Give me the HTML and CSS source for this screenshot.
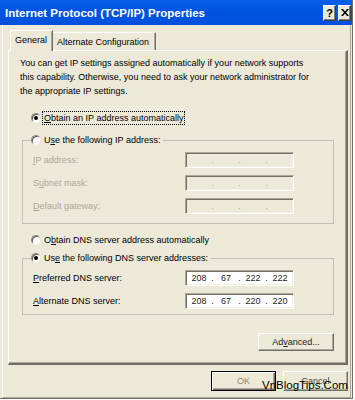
FILE: index.html
```html
<!DOCTYPE html>
<html>
<head>
<meta charset="utf-8">
<link rel="stylesheet" href="styles.css">
</head>
<body>
<div class="window">
  <div class="titlebar">
    <span class="title">Internet Protocol (TCP/IP) Properties</span>
    <div class="caption-btns">
      <span class="cbtn help">?</span>
      <span class="cbtn close"><svg width="8" height="7" viewBox="0 0 8 7"><path d="M0 0h2l2 2.4L6 0h2L5 3.5 8 7H6L4 4.6 2 7H0l3-3.5z" fill="#000"/></svg></span>
    </div>
  </div>
  <div class="client">
    <div class="tabs">
      <div class="tab active">General</div>
      <div class="tab">Alternate Configuration</div>
    </div>
    <div class="panel">
      <p class="intro">You can get IP settings assigned automatically if your network supports<br>this capability. Otherwise, you need to ask your network administrator for<br>the appropriate IP settings.</p>

      <div class="option"><span class="radio checked"></span><span class="focus"><u>O</u>btain an IP address automatically</span></div>

      <fieldset class="group group-ip">
        <legend><span class="radio"></span><span>U<u>s</u>e the following IP address:</span></legend>
        <div class="field disabled"><span class="label"><u>I</u>P address:</span><span class="ipbox"><span class="seg"></span><span class="dot">.</span><span class="seg"></span><span class="dot">.</span><span class="seg"></span><span class="dot">.</span><span class="seg"></span></span></div>
        <div class="field disabled"><span class="label">S<u>u</u>bnet mask:</span><span class="ipbox"><span class="seg"></span><span class="dot">.</span><span class="seg"></span><span class="dot">.</span><span class="seg"></span><span class="dot">.</span><span class="seg"></span></span></div>
        <div class="field disabled"><span class="label"><u>D</u>efault gateway:</span><span class="ipbox"><span class="seg"></span><span class="dot">.</span><span class="seg"></span><span class="dot">.</span><span class="seg"></span><span class="dot">.</span><span class="seg"></span></span></div>
      </fieldset>

      <div class="option option-dns"><span class="radio"></span><span>O<u>b</u>tain DNS server address automatically</span></div>

      <fieldset class="group group-dns">
        <legend><span class="radio checked"></span><span>Us<u>e</u> the following DNS server addresses:</span></legend>
        <div class="field"><span class="label"><u>P</u>referred DNS server:</span><span class="ipbox enabled"><span class="seg">208</span><span class="dot">.</span><span class="seg">67</span><span class="dot">.</span><span class="seg">222</span><span class="dot">.</span><span class="seg">222</span></span></div>
        <div class="field"><span class="label"><u>A</u>lternate DNS server:</span><span class="ipbox enabled"><span class="seg">208</span><span class="dot">.</span><span class="seg">67</span><span class="dot">.</span><span class="seg">220</span><span class="dot">.</span><span class="seg">220</span></span></div>
      </fieldset>

      <div class="adv-row"><span class="btn adv">Ad<u>v</u>anced...</span></div>
    </div>
    <div class="footer">
      <span class="btn default ok">OK</span>
      <span class="btn cancel">Cancel</span>
    </div>
  </div>
  <div class="watermark">VnBlogTips.Com</div>
</div>
</body>
</html>
```

FILE: styles.css
```css
* { box-sizing: border-box; }
html, body { margin: 0; padding: 0; }
body {
  width: 355px;
  height: 400px;
  overflow: hidden;
  background: #ffffff;
  font-family: "Liberation Sans", Arial, sans-serif;
  font-size: 9px;
  color: #000;
}
u { text-decoration: underline; text-underline-offset: 1px; }

.window {
  position: relative;
  width: 353px;
  height: 399px;
  background: #ece9d8;
  border-right: 1px solid #716f64;
  border-bottom: 1px solid #716f64;
  display: flex;
  flex-direction: column;
}

.titlebar {
  height: 25px;
  flex: none;
  background: linear-gradient(#0a5fe8, #0054e3 40%, #0050dc);
  display: flex;
  align-items: center;
  justify-content: space-between;
  padding: 0 1px 0 5px;
}
.title {
  color: #fff;
  font-weight: bold;
  font-size: 11.5px;
}
.caption-btns { display: flex; gap: 2px; }
.cbtn {
  width: 13px;
  height: 16px;
  background: #ece9d8;
  border: 1px solid;
  border-color: #fff #404040 #404040 #fff;
  box-shadow: inset -1px -1px 0 #808080;
  display: flex;
  align-items: center;
  justify-content: center;
  font-weight: bold;
  font-size: 11px;
  color: #000;
}

.client {
  flex: 1;
  margin: 0 1px 0 2px;
  border-left: 1px solid #fff;
  border-right: 1px solid #aca899;
  border-bottom: 1px solid #aca899;
  padding: 5px 2px 0 5px;
  display: flex;
  flex-direction: column;
}

.tabs {
  display: flex;
  align-items: flex-end;
  margin-bottom: -1px;
  padding-left: 2px;
  position: relative;
  z-index: 1;
}
.tab {
  background: #ece9d8;
  border-top: 1px solid #fff;
  border-left: 1px solid #fff;
  border-right: 1px solid #716f64;
  box-shadow: inset -1px 0 0 #aca899;
  font-size: 9px;
  display: flex;
  align-items: center;
}
.tab.active {
  height: 21px;
  padding: 0 5px 2px 4px;
}
.tab:not(.active) {
  height: 18px;
  margin-bottom: 1px;
  border-left: none;
  padding: 0 6px 0 4px;
}

.panel {
  height: 315px;
  flex: none;
  border-top: 1px solid #fff;
  border-left: 1px solid #fff;
  border-right: 2px solid #716f64;
  border-bottom: 2px solid #716f64;
  box-shadow: inset -1px -1px 0 #aca899;
  padding: 0 12px 0 11px;
  display: flex;
  flex-direction: column;
}

.intro {
  margin: 5px 0 0 0;
  line-height: 14px;
}

.option {
  height: 14px;
  margin-top: 13px;
  padding-left: 11px;
  display: flex;
  align-items: center;
  gap: 3px;
}
.option-dns { margin-top: 9px; }

.focus {
  outline: 1px dotted #000;
  padding: 0 1px;
  line-height: 12px;
  margin-left: -1px;
}

.radio {
  position: relative;
  width: 10px;
  height: 10px;
  flex: none;
  border-radius: 50%;
  background: #fff;
  border: 1px solid;
  border-color: #8d8a7e #e8e6dc #f4f3ee #8d8a7e;
  box-shadow: inset 1px 1px 0 #5b5a52;
}
.radio.checked::after {
  content: "";
  position: absolute;
  left: 2px;
  top: 2px;
  width: 4px;
  height: 4px;
  border-radius: 50%;
  background: #000;
}

.group {
  margin: 8px 0 0 2px;
  padding: 5px 0 9px 0;
  border: 1px solid #c2bfb0;
  min-width: 0;
  display: flex;
  flex-direction: column;
  gap: 7px;
}
.group-dns {
  margin-top: 4px;
  padding-bottom: 5px;
}
.group legend {
  margin-left: 8px;
  padding: 0 3px 0 0;
  height: 14px;
  display: flex;
  align-items: center;
  gap: 3px;
}

.field {
  display: grid;
  grid-template-columns: 152px 109px;
  align-items: center;
  height: 16px;
  padding-left: 10px;
}
.field.disabled .label { color: #aca899; }

.ipbox {
  height: 16px;
  display: flex;
  align-items: center;
  border: 1px solid;
  border-color: #aca899 #fff #fff #aca899;
  box-shadow: inset 1px 1px 0 #716f64, inset -1px -1px 0 #f1efe2;
  padding: 0 1px;
  line-height: 14px;
}
.ipbox.enabled { background: #fff; color: #222; }
.seg { flex: 1; text-align: center; }
.dot { width: 3px; text-align: center; }
.disabled .dot { color: #aca899; }

.adv-row {
  margin-top: 18px;
  display: flex;
  justify-content: flex-end;
}

.btn {
  display: flex;
  align-items: center;
  justify-content: center;
  background: #ece9d8;
  border: 1px solid;
  border-color: #fff #716f64 #716f64 #fff;
  box-shadow: inset -1px -1px 0 #aca899;
  color: #222;
}
.adv { width: 76px; height: 18px; }

.footer {
  margin-top: 6px;
  display: flex;
  justify-content: flex-end;
  gap: 7px;
}
.footer .btn { width: 65px; height: 20px; }
.btn.default {
  border: 1px solid #000;
  box-shadow: inset 1px 1px 0 #fff, inset -1px -1px 0 #716f64, inset -2px -2px 0 #aca899;
}
.ok { color: #8a877b; }
.cancel { color: #444; }

.watermark {
  position: absolute;
  left: 262px;
  top: 379px;
  font-size: 11.5px;
  color: #000;
}
```
